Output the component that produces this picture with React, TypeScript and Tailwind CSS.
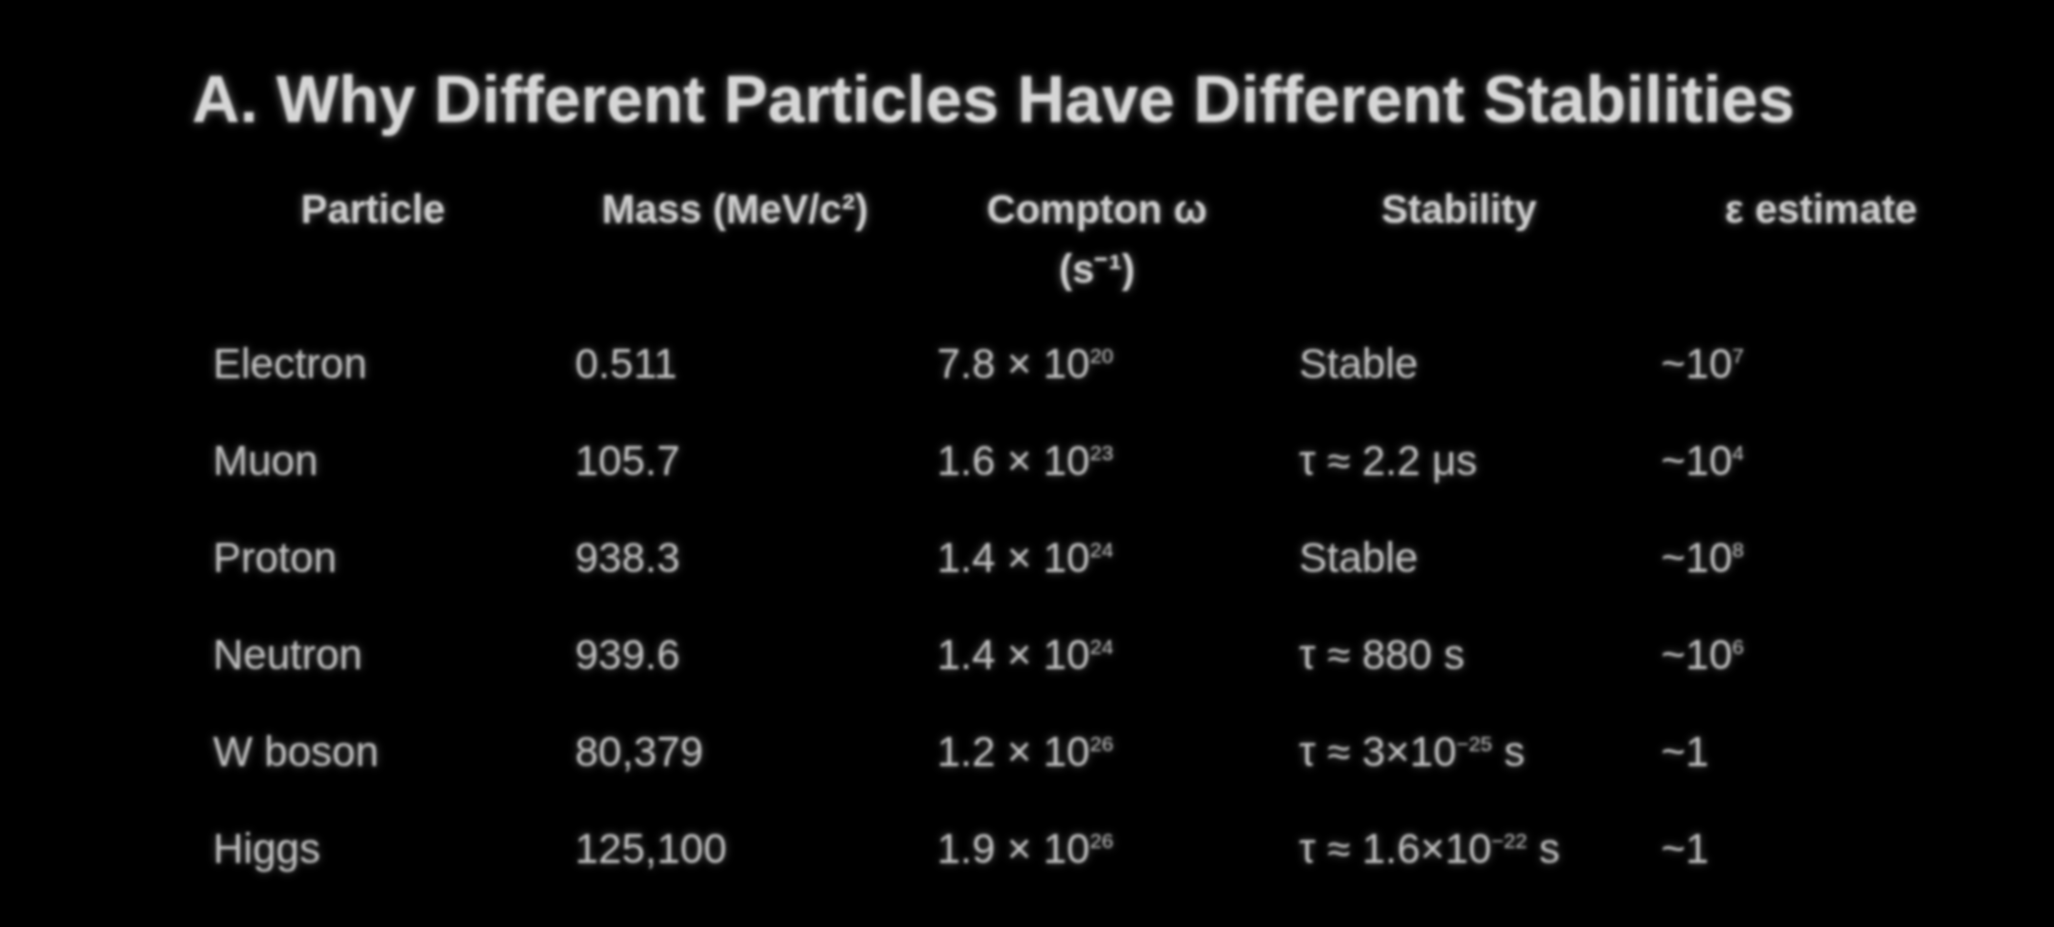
import type { ReactNode } from "react";

function Sup({ children }: { children: ReactNode }) {
  return <sup className="top-[-0.72em] text-[0.5em]">{children}</sup>;
}

const rows: ReactNode[][] = [
  ["Electron", "0.511", <>7.8 × 10<Sup>20</Sup></>, "Stable", <>~10<Sup>7</Sup></>],
  ["Muon", "105.7", <>1.6 × 10<Sup>23</Sup></>, "τ ≈ 2.2 μs", <>~10<Sup>4</Sup></>],
  ["Proton", "938.3", <>1.4 × 10<Sup>24</Sup></>, "Stable", <>~10<Sup>8</Sup></>],
  ["Neutron", "939.6", <>1.4 × 10<Sup>24</Sup></>, "τ ≈ 880 s", <>~10<Sup>6</Sup></>],
  ["W boson", "80,379", <>1.2 × 10<Sup>26</Sup></>, <>τ ≈ 3×10<Sup>−25</Sup> s</>, "~1"],
  ["Higgs", "125,100", <>1.9 × 10<Sup>26</Sup></>, <>τ ≈ 1.6×10<Sup>−22</Sup> s</>, "~1"],
];

export default function App() {
  return (
    <div className="min-h-screen w-full overflow-hidden bg-black font-['Liberation_Sans',Arial,sans-serif]">
      <div className="pl-[192px] pt-[60px] blur-[1.4px]">
        {/* title */}
        <h1 className="mb-[24px] text-[66px] font-bold leading-[1.2] text-[#d6d6d6] [text-shadow:0_0_10px_rgba(255,255,255,0.45)]">
          A. Why Different Particles Have Different Stabilities
        </h1>

        {/* table */}
        <table className="w-[1810px] table-fixed border-collapse">
          <thead>
            <tr className="text-[40px] font-bold leading-[60px] text-[#cdcdcd] [text-shadow:0_0_8px_rgba(255,255,255,0.4)]">
              <th className="px-[21px] py-[16px] text-center align-top">Particle</th>
              <th className="px-[21px] py-[16px] text-center align-top">Mass (MeV/c²)</th>
              <th className="px-[21px] py-[16px] text-center align-top">
                Compton ω
                <br />
                (s⁻¹)
              </th>
              <th className="px-[21px] py-[16px] text-center align-top">Stability</th>
              <th className="px-[21px] py-[16px] text-center align-top">ε estimate</th>
            </tr>
          </thead>
          <tbody>
            {rows.map((r, j) => (
              <tr
                key={j}
                className="text-[42px] leading-[63px] text-[#bfbfbf] [text-shadow:0_0_8px_rgba(255,255,255,0.35)]"
              >
                {r.map((c, i) => (
                  <td key={i} className="px-[21px] py-[17px] text-left whitespace-nowrap">
                    {c}
                  </td>
                ))}
              </tr>
            ))}
          </tbody>
        </table>
      </div>
    </div>
  );
}
